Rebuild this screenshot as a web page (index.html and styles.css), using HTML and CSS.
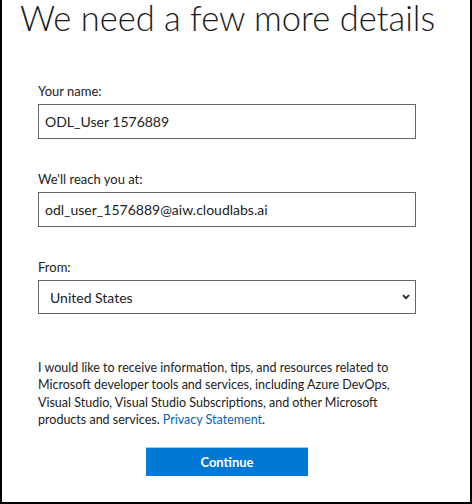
FILE: index.html
```html
<!DOCTYPE html>
<html>
<head>
<meta charset="utf-8">
<link rel="stylesheet" href="styles.css">
</head>
<body>
<div class="frame">
  <h1 class="title">We need a few more details</h1>
  <form class="form">
    <label class="field">
      <span class="label">Your name:</span>
      <input class="input" type="text" value="ODL_User 1576889">
    </label>
    <label class="field">
      <span class="label">We'll reach you at:</span>
      <input class="input" type="text" value="odl_user_1576889@aiw.cloudlabs.ai">
    </label>
    <label class="field">
      <span class="label">From:</span>
      <span class="select-wrap">
        <select class="select"><option>United States</option></select>
        <svg class="chev" width="8" height="6" viewBox="0 0 8 6"><path d="M1 1.2 L4 4.2 L7 1.2" fill="none" stroke="#222" stroke-width="1.8"/></svg>
      </span>
    </label>
    <p class="consent">I would like to receive information, tips, and resources related to Microsoft developer tools and services, including Azure DevOps, Visual Studio, Visual Studio Subscriptions, and other Microsoft products and services. <a class="link" href="#">Privacy Statement</a>.</p>
    <div class="actions">
      <button class="btn" type="button">Continue</button>
    </div>
  </form>
</div>
</body>
</html>
```
FILE: styles.css
```css
html, body {
  margin: 0;
  padding: 0;
  background: #fff;
}
.frame {
  box-sizing: border-box;
  width: 472px;
  height: 504px;
  border: 2px solid #000;
  border-top: none;
  font-family: Lato, "Open Sans", sans-serif;
  color: #222;
  overflow: hidden;
}
.title {
  margin: -2px 0 0;
  padding-left: 18px;
  font-size: 34.5px;
  font-weight: 300;
  line-height: 40px;
  color: #1b1b1b;
}
.form {
  margin: 45px 0 0;
  padding-left: 36px;
  width: 378px;
}
.field {
  display: flex;
  flex-direction: column;
  margin-bottom: 32px;
}
.label {
  font-size: 13px;
  line-height: 16px;
  color: #222;
  margin-bottom: 5px;
}
.input, .select {
  box-sizing: border-box;
  width: 378px;
  height: 35px;
  border: 1px solid #666;
  border-radius: 0;
  padding: 0 6px;
  font-family: Lato, "Open Sans", sans-serif;
  font-size: 14px;
  color: #222;
  background: #fff;
  outline: none;
  margin: 0;
}
.select-wrap {
  position: relative;
  display: block;
}
.select {
  height: 34px;
  appearance: none;
  -webkit-appearance: none;
  padding-left: 11px;
}
.chev {
  position: absolute;
  right: 6px;
  top: 14px;
}
.consent {
  margin: 45px 0 0;
  font-size: 12.5px;
  line-height: 17.3px;
  color: #222;
  width: 360px;
}
.link {
  color: #0067b8;
  text-decoration: none;
}
.actions {
  display: flex;
  justify-content: center;
  margin-top: 19px;
  width: 450px;
  margin-left: -36px;
}
.btn {
  width: 162px;
  height: 29px;
  border: none;
  border-top: 1px solid #9fcbef;
  background: #0078d4;
  color: #fff;
  font-family: Lato, "Open Sans", sans-serif;
  font-weight: 700;
  font-size: 13px;
  padding: 0;
}
```
